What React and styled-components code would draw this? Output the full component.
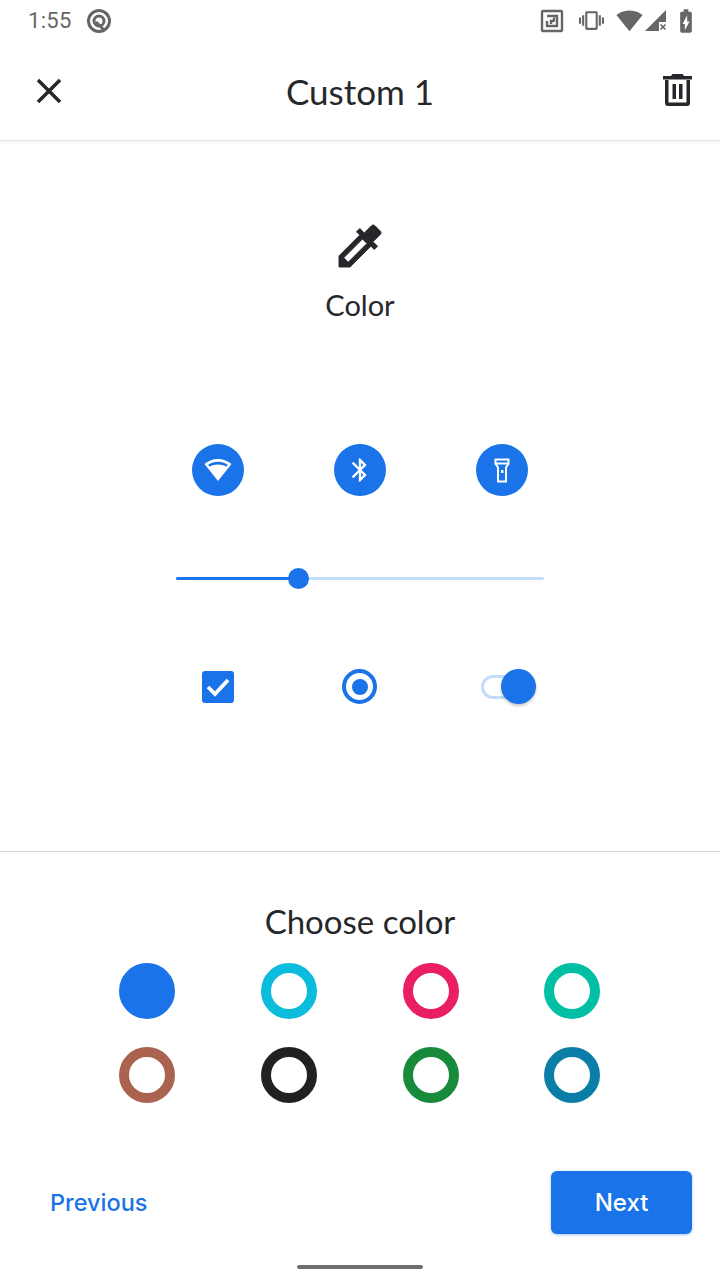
import React from 'react';
import styled, { createGlobalStyle } from 'styled-components';
import { MdClose, MdBluetooth, MdVibration, MdBatteryChargingFull, MdSignalWifi4Bar } from 'react-icons/md';

const BLUE = '#1a73e8';
const INK = '#26272a';
const GREY = '#666666';

const GlobalStyle = createGlobalStyle`
  html, body { margin: 0; padding: 0; background: #fff; }
  body { font-family: "Open Sans", "Liberation Sans", sans-serif; }
`;

const Page = styled.div`
  width: 720px;
  height: 1280px;
  display: flex;
  flex-direction: column;
  background: #fff;
  overflow: hidden;
`;

const StatusBar = styled.div`
  height: 44px;
  display: flex;
  align-items: center;
  justify-content: space-between;
  padding: 0 20px 3px 28px;
  box-sizing: border-box;
  color: ${GREY};
`;

const StatusGroup = styled.div`
  display: flex;
  align-items: center;
`;

const StatusSlot = styled.span`
  display: flex;
  margin-left: ${({ $left }) => $left}px;
`;

const Time = styled.span`
  font-family: Roboto, sans-serif;
  font-size: 22px;
  letter-spacing: 0.3px;
`;

const AppBar = styled.div`
  height: 96px;
  display: grid;
  grid-template-columns: 1fr auto 1fr;
  align-items: center;
  padding: 0 28px;
  border-bottom: 1px solid #e4e4e4;
  box-shadow: 0 1px 3px rgba(0, 0, 0, 0.06);
  color: ${INK};
`;

const CloseIcon = styled(MdClose)`
  margin-bottom: 2px;
`;

const Title = styled.h1`
  margin: 0 0 2px;
  font-family: Lato, sans-serif;
  font-size: 35px;
  font-weight: 400;
  color: ${INK};
`;

const TrashSlot = styled.div`
  display: flex;
  justify-content: flex-end;
  margin-bottom: 4px;
`;

const Preview = styled.div`
  flex: 1;
  display: flex;
  flex-direction: column;
  align-items: center;
  border-bottom: 1px solid #d4d4d4;
  padding-top: 77px;
`;

const Heading = styled.div`
  display: flex;
  flex-direction: column;
  align-items: center;
  color: ${INK};
  gap: 13px;
`;

const HeadingLabel = styled.span`
  font-family: Lato, sans-serif;
  font-size: 29px;
  line-height: 36px;
`;

const ControlRow = styled.div`
  display: grid;
  grid-template-columns: repeat(3, 142px);
  justify-items: center;
  align-items: center;
  margin-top: ${({ $top }) => $top}px;
`;

const RoundIcon = styled.div`
  width: 52px;
  height: 52px;
  border-radius: 50%;
  background: ${BLUE};
  color: #fff;
  display: flex;
  align-items: center;
  justify-content: center;
`;

const SliderTrack = styled.div`
  position: relative;
  width: 368px;
  height: 3px;
  margin-top: 81px;
  border-radius: 2px;
  background: #c4dcfb;
`;

const SliderFill = styled.div`
  height: 100%;
  border-radius: 2px;
  background: ${BLUE};
`;

const SliderThumb = styled.div`
  position: absolute;
  top: -9px;
  width: 21px;
  height: 21px;
  margin-left: -10.5px;
  border-radius: 50%;
  background: ${BLUE};
`;

const Checkbox = styled.div`
  width: 32px;
  height: 32px;
  border-radius: 3px;
  background: ${BLUE};
  display: flex;
  align-items: center;
  justify-content: center;
`;

const Radio = styled.div`
  width: 35px;
  height: 35px;
  margin-right: 1px;
  box-sizing: border-box;
  border: 4px solid ${BLUE};
  border-radius: 50%;
  display: flex;
  align-items: center;
  justify-content: center;
  &::after {
    content: '';
    width: 16px;
    height: 16px;
    border-radius: 50%;
    background: ${BLUE};
  }
`;

const Switch = styled.div`
  position: relative;
  width: 55px;
  height: 35px;
  margin-left: 12px;
  display: flex;
  align-items: center;
`;

const SwitchTrack = styled.div`
  width: 40px;
  height: 24px;
  box-sizing: border-box;
  border: 3px solid #c4dcfb;
  border-radius: 12px;
`;

const SwitchKnob = styled.div`
  position: absolute;
  right: 0;
  top: 0;
  width: 35px;
  height: 35px;
  border-radius: 50%;
  background: ${BLUE};
  box-shadow: 0 2px 3px rgba(0, 0, 0, 0.22);
`;

const Bottom = styled.div`
  height: 428px;
  display: flex;
  flex-direction: column;
  align-items: center;
  box-sizing: border-box;
  padding-top: 49px;
`;

const ChooseLabel = styled.div`
  font-family: Lato, sans-serif;
  font-size: 33px;
  line-height: 41px;
  color: ${INK};
`;

const Swatches = styled.div`
  display: grid;
  grid-template-columns: repeat(4, 56px);
  column-gap: 85.6px;
  row-gap: 28px;
  margin: 21px 0.4px 0 0;
`;

const Swatch = styled.div`
  width: 56px;
  height: 56px;
  box-sizing: border-box;
  border-radius: 50%;
  border: ${({ $filled }) => ($filled ? '28px' : '10.5px')} solid ${({ $color }) => $color};
`;

const Footer = styled.div`
  align-self: stretch;
  display: flex;
  align-items: center;
  justify-content: space-between;
  padding: 0 28px 0 50px;
  margin-top: 68px;
`;

const PrevButton = styled.button`
  border: 0;
  padding: 0;
  background: none;
  font-family: Inter, sans-serif;
  font-size: 23.5px;
  font-weight: 500;
  color: ${BLUE};
`;

const NextButton = styled.button`
  width: 141px;
  height: 63px;
  border: 0;
  border-radius: 6px;
  background: ${BLUE};
  box-shadow: 0 1px 3px rgba(26, 115, 232, 0.4);
  font-family: Inter, sans-serif;
  font-size: 24px;
  font-weight: 500;
  color: #fff;
`;

const HomeBar = styled.div`
  width: 126px;
  height: 4px;
  margin-top: 31px;
  border-radius: 2px;
  background: #6f6f6f;
`;

const SWATCHES = ['#1a73e8', '#0cbcdc', '#e91e63', '#00bfa5', '#a9634f', '#212121', '#188a3c', '#0b7ea8'];

const QIcon = () => (
  <svg width="26" height="26" viewBox="0 0 26 26" fill="none" stroke="currentColor">
    <circle cx="13" cy="13" r="10.5" strokeWidth="3" />
    <circle cx="13" cy="13" r="5" strokeWidth="3" />
    <path d="M10 14l8 8" strokeWidth="3" />
  </svg>
);

const NfcIcon = () => (
  <svg width="24" height="24" viewBox="0 0 24 24" fill="none" stroke="currentColor" strokeWidth="2.4">
    <rect x="2" y="2" width="20" height="20" rx="1" />
    <path d="M7 7h10v10H7V12" />
    <path d="M11 15v-3h3" />
    <path d="M14 8.5v4" />
  </svg>
);

const SignalIcon = () => (
  <svg width="22" height="22" viewBox="0 0 22 22" fill="currentColor">
    <path d="M0 21L21 0v12h-7v9z" />
    <path d="M15.5 14.5l5 5M20.5 14.5l-5 5" stroke="currentColor" strokeWidth="1.6" />
  </svg>
);

const TrashIcon = () => (
  <svg width="29" height="32" viewBox="0 0 29 32" fill="currentColor">
    <path d="M9.5 0h10l1.5 2h8v3.5H0V2h8z" />
    <path fillRule="evenodd" d="M2 6h25v23a3 3 0 0 1-3 3H5a3 3 0 0 1-3-3zM5.500 6v22.500h18V6z" />
    <rect x="9.5" y="10" width="3.500" height="15" />
    <rect x="16" y="10" width="3.500" height="15" />
  </svg>
);

const DropperIcon = () => (
  <svg width="56" height="56" viewBox="0 0 24 24" fill="currentColor" stroke="currentColor" strokeWidth="0.4">
    <path d="M20.71 5.63l-2.34-2.34c-.39-.39-1.02-.39-1.41 0l-3.12 3.12-1.93-1.91-1.41 1.41 1.42 1.42L3 16.25V21h4.75l8.92-8.92 1.42 1.42 1.41-1.41-1.92-1.92 3.12-3.12c.4-.4.4-1.03.01-1.42zM6.92 19L5 17.08l8.06-8.06 1.92 1.92L6.92 19z" />
  </svg>
);

const WifiIcon = () => (
  <svg width="28" height="24" viewBox="0 0 28 24" fill="#fff">
    <path fillRule="evenodd" d="M14 1C8.500 1 4 3 0.500 6L14 23 27.500 6C24 3 19.500 1 14 1zM14 3.800c-3.800 0-7 1.100-9.800 3l1.500 1.900C8 7.400 11 6.500 14 6.500s6 .9 8.300 2.200l1.500-1.900c-2.800-1.900-6-3-9.800-3z" />
  </svg>
);

const FlashlightIcon = () => (
  <svg width="16" height="25" viewBox="0 0 16 25" fill="none" stroke="#fff" strokeWidth="2">
    <rect x="1.5" y="1.5" width="13" height="4" />
    <path d="M1.500 5.500l2.500 4v14h8v-14l2.500-4" />
    <rect x="7" y="12" width="2.500" height="3" fill="#fff" stroke="none" />
  </svg>
);

const CheckIcon = () => (
  <svg width="24" height="20" viewBox="0 0 24 20" fill="none" stroke="#fff" strokeWidth="3.800">
    <path d="M2 10l7 7L22 3" />
  </svg>
);

const App = () => (
  <Page>
    <GlobalStyle />
    <StatusBar>
      <StatusGroup>
        <Time>1:55</Time>
        <StatusSlot $left={14}><QIcon /></StatusSlot>
      </StatusGroup>
      <StatusGroup>
        <NfcIcon />
        <StatusSlot $left={15}><MdVibration size={25} /></StatusSlot>
        <StatusSlot $left={12}><MdSignalWifi4Bar size={27} /></StatusSlot>
        <StatusSlot $left={2}><SignalIcon /></StatusSlot>
        <StatusSlot $left={5}><MdBatteryChargingFull size={28} /></StatusSlot>
      </StatusGroup>
    </StatusBar>

    <AppBar>
      <CloseIcon size={42} />
      <Title>Custom 1</Title>
      <TrashSlot><TrashIcon /></TrashSlot>
    </AppBar>

    <Preview>
      <Heading>
        <DropperIcon />
        <HeadingLabel>Color</HeadingLabel>
      </Heading>

      <ControlRow $top={121}>
        <RoundIcon><WifiIcon /></RoundIcon>
        <RoundIcon><MdBluetooth size={28} /></RoundIcon>
        <RoundIcon><FlashlightIcon /></RoundIcon>
      </ControlRow>

      <SliderTrack>
        <SliderFill style={{ width: '33.3%' }} />
        <SliderThumb style={{ left: '33.3%' }} />
      </SliderTrack>

      <ControlRow $top={89}>
        <Checkbox><CheckIcon /></Checkbox>
        <Radio />
        <Switch>
          <SwitchTrack />
          <SwitchKnob />
        </Switch>
      </ControlRow>
    </Preview>

    <Bottom>
      <ChooseLabel>Choose color</ChooseLabel>
      <Swatches>
        {SWATCHES.map((color, i) => (
          <Swatch key={color} $color={color} $filled={i === 0} />
        ))}
      </Swatches>
      <Footer>
        <PrevButton type="button">Previous</PrevButton>
        <NextButton type="button">Next</NextButton>
      </Footer>
      <HomeBar />
    </Bottom>
  </Page>
);

export default App;
